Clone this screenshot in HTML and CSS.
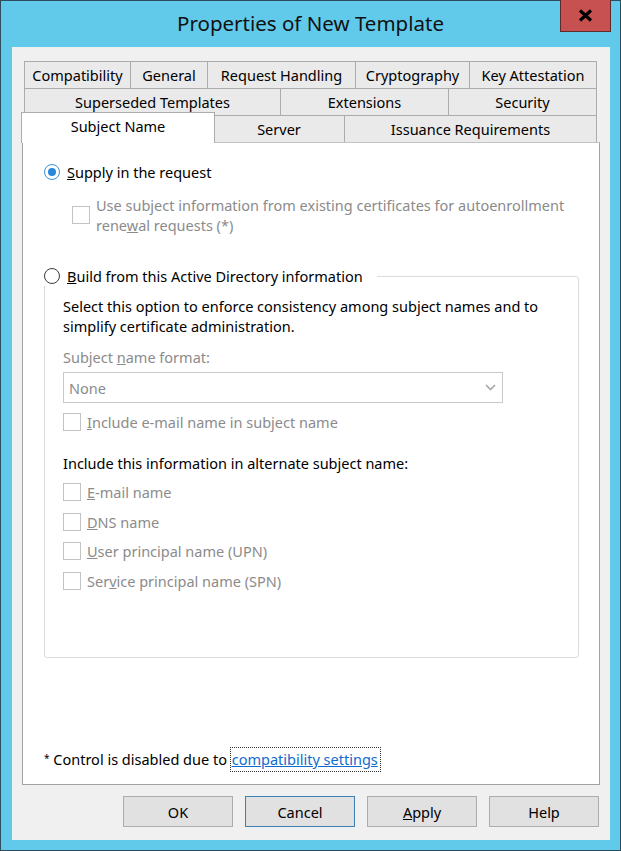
FILE: index.html
```html
<!DOCTYPE html>
<html lang="en">
<head>
    <meta charset="UTF-8">
    <title>Properties of New Template</title>
    <link rel="stylesheet" href="styles.css">
</head>
<body>

<div class="window">
    <div class="titlebar">
        <span class="title">Properties of New Template</span>
        <div class="close-btn">
            <svg width="15" height="13" viewBox="0 0 15 13">
                <path d="M2 1.5 L13 11.5 M13 1.5 L2 11.5" stroke="#000" stroke-width="3.2" fill="none"/>
            </svg>
        </div>
    </div>

    <div class="client">
        <!-- tab strip, three rows -->
        <div class="tabs">
            <div class="tab-row row1">
                <div class="tab">Compatibility</div>
                <div class="tab">General</div>
                <div class="tab">Request Handling</div>
                <div class="tab">Cryptography</div>
                <div class="tab">Key Attestation</div>
            </div>
            <div class="tab-row row2">
                <div class="tab">Superseded Templates</div>
                <div class="tab">Extensions</div>
                <div class="tab">Security</div>
            </div>
            <div class="tab-row row3">
                <div class="tab active">Subject Name</div>
                <div class="tab">Server</div>
                <div class="tab">Issuance Requirements</div>
            </div>
        </div>

        <div class="panel">
            <label class="option">
                <span class="radio checked"></span>
                <span><u>S</u>upply in the request</span>
            </label>

            <div class="check-row sub-check disabled">
                <span class="checkbox"></span>
                <span>Use subject information from existing certificates for autoenrollment<br>rene<u>w</u>al requests (*)</span>
            </div>

            <fieldset class="group">
                <legend class="option">
                    <span class="radio"></span>
                    <span><u>B</u>uild from this Active Directory information</span>
                </legend>

                <p class="group-text">Select this option to enforce consistency among subject names and to simplify certificate administration.</p>

                <div class="field-label disabled">Subject <u>n</u>ame format:</div>
                <div class="select">
                    <span>None</span>
                    <svg width="11" height="7" viewBox="0 0 11 7">
                        <path d="M1 1 L5.5 5.5 L10 1" stroke="#a6a6a6" stroke-width="1.6" fill="none"/>
                    </svg>
                </div>

                <div class="check-row disabled">
                    <span class="checkbox"></span>
                    <span><u>I</u>nclude e-mail name in subject name</span>
                </div>

                <div class="alt-label">Include this information in alternate subject name:</div>

                <div class="alt-list">
                    <div class="check-row disabled">
                        <span class="checkbox"></span>
                        <span><u>E</u>-mail name</span>
                    </div>
                    <div class="check-row disabled">
                        <span class="checkbox"></span>
                        <span><u>D</u>NS name</span>
                    </div>
                    <div class="check-row disabled">
                        <span class="checkbox"></span>
                        <span><u>U</u>ser principal name (UPN)</span>
                    </div>
                    <div class="check-row disabled">
                        <span class="checkbox"></span>
                        <span>Ser<u>v</u>ice principal name (SPN)</span>
                    </div>
                </div>
            </fieldset>

            <div class="footnote">
                <span class="star">*</span> Control is disabled due to <a href="#" class="link">compatibility settings</a>
            </div>
        </div>

        <div class="buttons">
            <div class="btn">OK</div>
            <div class="btn default">Cancel</div>
            <div class="btn"><u>A</u>pply</div>
            <div class="btn">Help</div>
        </div>
    </div>
</div>

</body>
</html>
```

FILE: styles.css
```css
/* Page / window frame */
body {
    margin: 0;
    font-family: "Noto Sans", "Open Sans", sans-serif;
    font-size: 14.5px;
    color: #000;
}

.window {
    position: relative;
    width: 621px;
    height: 851px;
    box-sizing: border-box;
    border: 1px solid #2b4d5e;
    background-color: #61c9ea;
    display: flex;
    flex-direction: column;
}

/* Title bar */
.titlebar {
    height: 46px;
    display: flex;
    align-items: center;
    justify-content: center;
}

.title {
    font-size: 20.5px;
    color: #111;
    margin-top: -2px;
}

.close-btn {
    position: absolute;
    top: -1px;
    right: 9px;
    width: 51px;
    height: 32px;
    box-sizing: border-box;
    background-color: #c75050;
    border: 1px solid #5f2a2a;
    border-top: none;
    display: flex;
    align-items: center;
    justify-content: center;
}

/* Client area */
.client {
    flex: 1;
    margin: 0 10px 10px 11px;
    background-color: #f0f0f0;
    padding: 14px 0 0 10px;
    display: flex;
    flex-direction: column;
}

/* Tabs */
.tabs {
    width: 573px;
    margin-left: 2px;
}

.tab-row {
    display: grid;
    height: 28px;
    margin-bottom: -1px;
}

.row1 {
    grid-template-columns: 107px 77px 148px 114px 127px;
}

.row2 {
    grid-template-columns: 257px 168px 148px;
}

.row3 {
    grid-template-columns: 190px 131px 252px;
}

.tab {
    border: 1px solid #acacac;
    border-left: none;
    background-color: #eaeaea;
    display: flex;
    align-items: center;
    justify-content: center;
    white-space: nowrap;
}

.tab:first-child {
    border-left: 1px solid #acacac;
}

.tab.active {
    position: relative;
    z-index: 1;
    margin: -3px -1px 0 -3px;
    border-bottom: none;
    background-color: #fff;
    padding-bottom: 5px;
}

/* Tab page */
.panel {
    width: 578px;
    height: 643px;
    box-sizing: border-box;
    border: 1px solid #a3a3a3;
    border-top-color: #c4c4c4;
    background-color: #fff;
    padding: 19px 0 13px 21px;
    display: flex;
    flex-direction: column;
}

.option {
    display: flex;
    align-items: center;
    height: 20px;
    gap: 7px;
}

.radio {
    width: 16px;
    height: 16px;
    box-sizing: border-box;
    border: 1px solid #3c3c3c;
    border-radius: 50%;
    background-color: #fff;
    position: relative;
}

.radio.checked {
    border-color: #3d8ed6;
}

.radio.checked::after {
    content: "";
    position: absolute;
    left: 3px;
    top: 3px;
    width: 8px;
    height: 8px;
    border-radius: 50%;
    background-color: #2a88d8;
}

.check-row {
    display: flex;
    align-items: center;
    gap: 6px;
    line-height: 20px;
}

.checkbox {
    width: 18px;
    height: 18px;
    box-sizing: border-box;
    border: 1px solid #c3c3c3;
    background-color: #fff;
    flex-shrink: 0;
}

.disabled {
    color: #8b8b8b;
}

.sub-check {
    margin: 13px 0 0 28px;
}

/* Group box */
.group {
    width: 535px;
    box-sizing: border-box;
    margin: 31px 0 0 0;
    padding: 0 0 66px 18px;
    border: 1px solid #dcdcdc;
    border-radius: 3px;
}

.group legend {
    padding: 0 14px 0 0;
    margin-left: -19px;
}

.group-text {
    margin: 10px 0 0 0;
    line-height: 20px;
    width: 500px;
}

.field-label {
    margin-top: 11px;
    line-height: 20px;
}

.select {
    width: 440px;
    height: 31px;
    box-sizing: border-box;
    margin-top: 5px;
    border: 1px solid #c9c9c9;
    background-color: #fff;
    color: #8b8b8b;
    display: flex;
    align-items: center;
    justify-content: space-between;
    padding: 0 6px 0 5px;
}

.select + .check-row {
    margin-top: 9px;
}

.alt-label {
    margin-top: 21px;
    line-height: 20px;
}

.alt-list {
    margin-top: 9px;
    display: flex;
    flex-direction: column;
    gap: 9.5px;
}

/* Footnote */
.footnote {
    margin-top: auto;
    line-height: 24px;
}

.star {
    font-size: 10px;
    vertical-align: 3px;
}

.link {
    color: #0f6ccf;
    text-decoration: underline;
    outline: 1px dotted #333;
    outline-offset: 0;
    padding: 1px 2px 2px 1px;
}

/* Dialog buttons */
.buttons {
    display: flex;
    justify-content: flex-end;
    gap: 12px;
    margin-top: 11px;
    padding-right: 11px;
}

.btn {
    width: 110px;
    height: 31px;
    box-sizing: border-box;
    border: 1px solid #adadad;
    background-color: #e1e1e1;
    display: flex;
    align-items: center;
    justify-content: center;
}

.btn.default {
    border-color: #3c7fb1;
}
```
